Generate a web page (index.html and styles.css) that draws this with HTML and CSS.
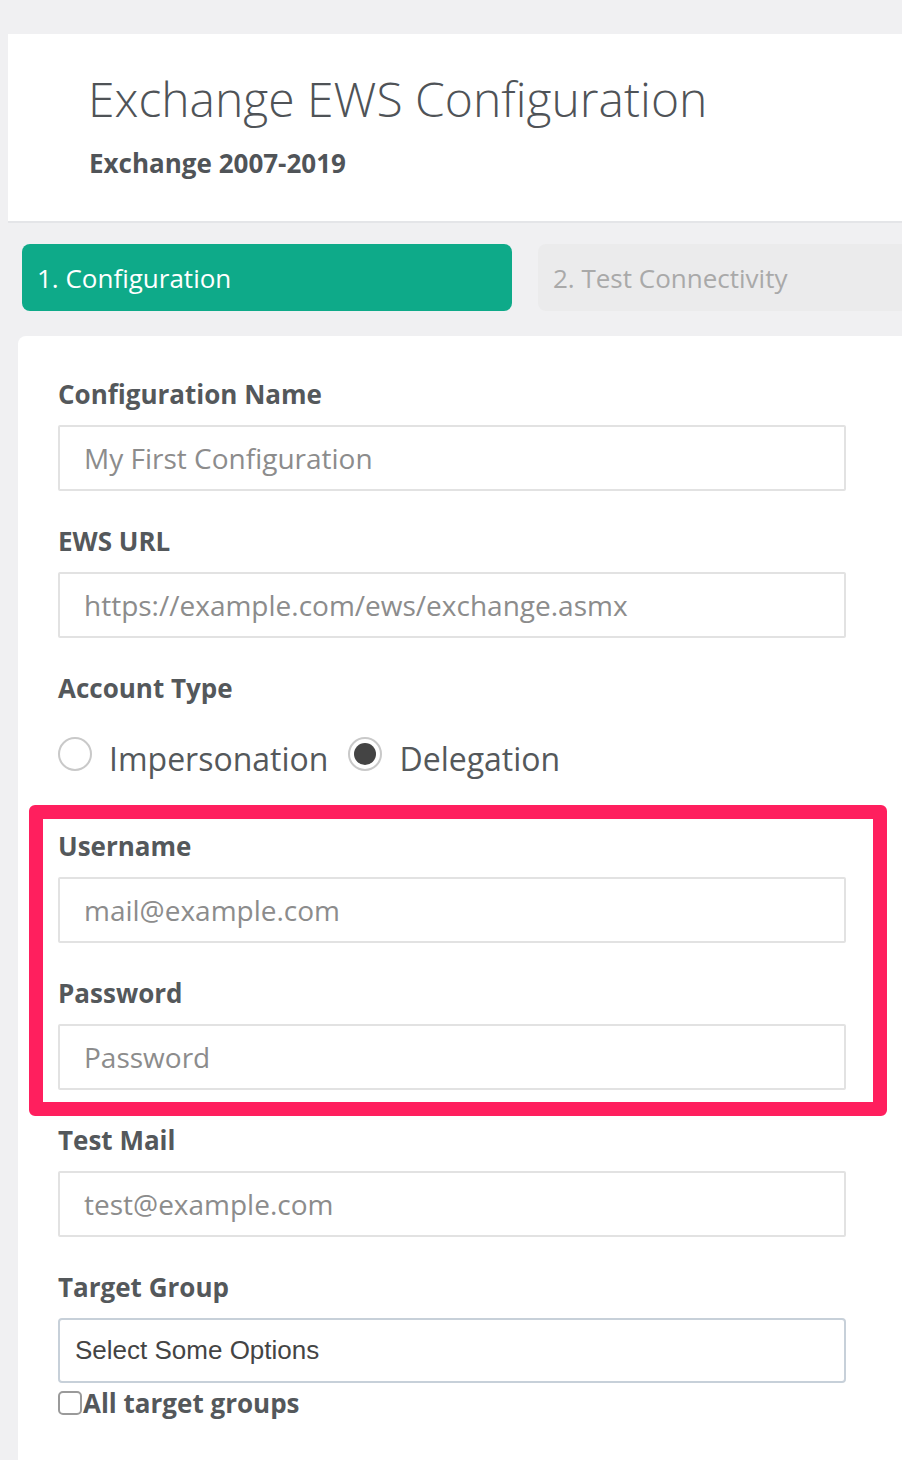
FILE: index.html
```html
<!DOCTYPE html>
<html lang="en">
<head>
<meta charset="utf-8">
<title>Exchange EWS Configuration</title>
<link rel="stylesheet" href="styles.css">
</head>
<body>
<div class="page">
  <header class="header">
    <h1 class="title">Exchange EWS Configuration</h1>
    <div class="subtitle">Exchange 2007-2019</div>
  </header>

  <nav class="steps">
    <div class="step step-active">1. Configuration</div>
    <div class="step step-inactive">2. Test Connectivity</div>
  </nav>

  <section class="card">
    <div class="form-group">
      <label class="label">Configuration Name</label>
      <input class="input" type="text" placeholder="My First Configuration">
    </div>
    <div class="form-group">
      <label class="label">EWS URL</label>
      <input class="input" type="text" placeholder="https://example.com/ews/exchange.asmx">
    </div>
    <div class="form-group radio-group">
      <label class="label">Account Type</label>
      <div class="radios">
        <div class="radio-item">
          <span class="radio"></span>
          <span class="radio-text">Impersonation</span>
        </div>
        <div class="radio-item">
          <span class="radio radio-checked"></span>
          <span class="radio-text">Delegation</span>
        </div>
      </div>
    </div>

    <div class="highlight">
      <div class="form-group">
        <label class="label">Username</label>
        <input class="input" type="text" placeholder="mail@example.com">
      </div>
      <div class="form-group">
        <label class="label">Password</label>
        <input class="input" type="password" placeholder="Password">
      </div>
    </div>

    <div class="form-group">
      <label class="label">Test Mail</label>
      <input class="input" type="text" placeholder="test@example.com">
    </div>
    <div class="form-group last">
      <label class="label">Target Group</label>
      <div class="select">Select Some Options</div>
      <div class="check-row">
        <span class="checkbox"></span>
        <span class="check-text">All target groups</span>
      </div>
    </div>
  </section>
</div>
</body>
</html>
```

FILE: styles.css
```css
* { box-sizing: border-box; }

html, body {
  margin: 0;
  padding: 0;
}

body {
  background: #f0f0f2;
  font-family: "Open Sans", "Liberation Sans", sans-serif;
  color: #54585b;
  overflow: hidden;
  width: 902px;
  height: 1460px;
}

.page {
  padding-top: 34px;
  width: 1200px;
}

.header {
  margin-left: 8px;
  background: #ffffff;
  border-bottom: 2px solid #e4e5e8;
  padding: 35px 0 41px 80px;
  height: 189px;
}

.title {
  margin: 0;
  font-size: 48px;
  font-weight: 300;
  line-height: 60px;
  color: #4f5357;
}

.subtitle {
  margin-top: 18px;
  margin-left: 1px;
  font-size: 26px;
  font-weight: 700;
  line-height: 32px;
  color: #505458;
}

.steps {
  display: flex;
  gap: 26px;
  margin: 21px 0 0 22px;
}

.step {
  width: 490px;
  height: 67px;
  border-radius: 8px;
  display: flex;
  align-items: center;
  padding-left: 15px;
  font-size: 26px;
  line-height: 36px;
}

.step-active {
  background: #0eaa89;
  color: #ffffff;
}

.step-inactive {
  background: #ebebec;
  color: #a9a9a9;
}

.card {
  margin: 25px 0 0 18px;
  background: #ffffff;
  border-radius: 8px;
  padding: 40px 40px 60px 40px;
  width: 1000px;
}

.form-group {
  width: 788px;
  margin-bottom: 32px;
}

.label {
  display: block;
  font-size: 26px;
  font-weight: 700;
  line-height: 36px;
  margin-bottom: 13px;
  color: #54585b;
}

.input {
  display: block;
  width: 788px;
  height: 66px;
  border: 2px solid #e2e2e2;
  border-radius: 2px;
  padding: 0 0 0 24px;
  font-family: "Open Sans", "Liberation Sans", sans-serif;
  font-size: 28px;
  color: #54585b;
  background: #ffffff;
  outline: none;
}

.input::placeholder {
  color: #8c8c8c;
  opacity: 1;
}

.radio-group {
  margin-bottom: 47px;
}

.radios {
  display: flex;
  gap: 20px;
  margin-top: 31px;
}

.radio-item {
  display: flex;
  align-items: flex-start;
}

.radio {
  width: 34px;
  height: 34px;
  border-radius: 50%;
  border: 2px solid #c9c9c9;
  background: #ffffff;
  margin-right: 17px;
  display: flex;
  align-items: center;
  justify-content: center;
  flex: none;
}

.radio-checked::after {
  content: "";
  width: 22px;
  height: 22px;
  border-radius: 50%;
  background: #444444;
}

.radio-text {
  font-size: 32px;
  line-height: 44px;
  color: #54585b;
}

.highlight {
  position: relative;
  width: 788px;
  margin-bottom: 32px;
}

.highlight .form-group:last-child {
  margin-bottom: 0;
}

.highlight::before {
  content: "";
  position: absolute;
  top: -23px;
  left: -29px;
  right: -41px;
  bottom: -26px;
  border: 14px solid #ff1f5e;
  border-radius: 6px;
  pointer-events: none;
}

.select {
  height: 65px;
  border: 2px solid #c7d0d9;
  border-radius: 4px;
  padding-left: 15px;
  display: flex;
  align-items: center;
  font-family: "Liberation Sans", Arial, sans-serif;
  font-size: 26px;
  color: #444444;
}

.check-row {
  display: flex;
  align-items: center;
  margin-top: 8px;
  height: 24px;
}

.checkbox {
  width: 24px;
  height: 24px;
  border: 2px solid #9a9a9a;
  border-radius: 5px;
  background: #ffffff;
  flex: none;
  margin-right: 1px;
}

.check-text {
  font-size: 26px;
  font-weight: 700;
  line-height: 32px;
  color: #54585b;
}
```
